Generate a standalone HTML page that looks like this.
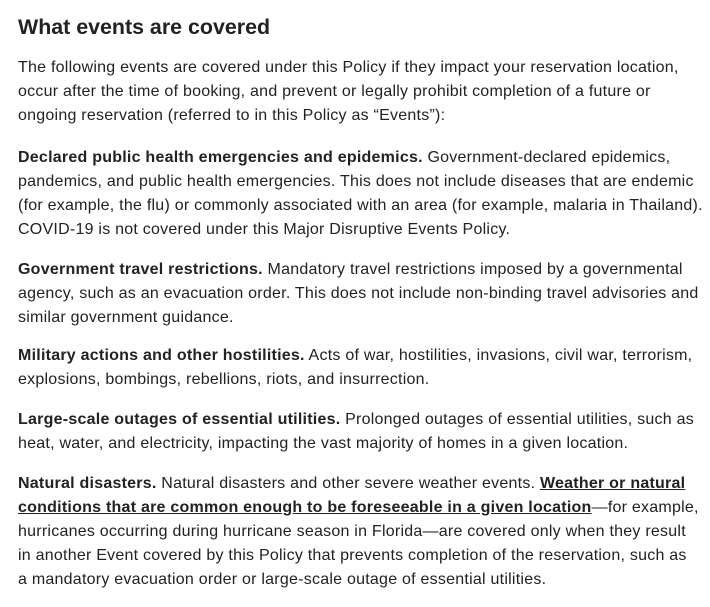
<!DOCTYPE html>
<html><head><meta charset="utf-8"><style>
body{margin:0;background:#fff;color:#222;font-family:"Liberation Sans",sans-serif;width:710px;height:607px;overflow:hidden}
h2{position:absolute;left:18px;top:12px;margin:0;font-size:21.4px;font-weight:bold;line-height:30px;white-space:nowrap;color:#222}
p{position:absolute;left:18px;margin:0;font-size:16px;line-height:24px;white-space:nowrap;letter-spacing:0.24px}
b{font-weight:bold}
u{text-decoration:underline;font-weight:bold}
</style></head><body>
<h2>What events are covered</h2>
<p style="top:56px">The following events are covered under this Policy if they impact your reservation location,<br>occur after the time of booking, and prevent or legally prohibit completion of a future or<br>ongoing reservation (referred to in this Policy as “Events”):</p>
<p style="top:146px"><b>Declared public health emergencies and epidemics.</b> Government-declared epidemics,<br>pandemics, and public health emergencies. This does not include diseases that are endemic<br>(for example, the flu) or commonly associated with an area (for example, malaria in Thailand).<br>COVID-19 is not covered under this Major Disruptive Events Policy.</p>
<p style="top:258px"><b>Government travel restrictions.</b> Mandatory travel restrictions imposed by a governmental<br>agency, such as an evacuation order. This does not include non-binding travel advisories and<br>similar government guidance.</p>
<p style="top:344px"><b>Military actions and other hostilities.</b> Acts of war, hostilities, invasions, civil war, terrorism,<br>explosions, bombings, rebellions, riots, and insurrection.</p>
<p style="top:408px"><b>Large-scale outages of essential utilities.</b> Prolonged outages of essential utilities, such as<br>heat, water, and electricity, impacting the vast majority of homes in a given location.</p>
<p style="top:472px"><b>Natural disasters.</b> Natural disasters and other severe weather events. <u>Weather or natural</u><br><u>conditions that are common enough to be foreseeable in a given location</u>—for example,<br>hurricanes occurring during hurricane season in Florida—are covered only when they result<br>in another Event covered by this Policy that prevents completion of the reservation, such as<br>a mandatory evacuation order or large-scale outage of essential utilities.</p>
</body></html>
